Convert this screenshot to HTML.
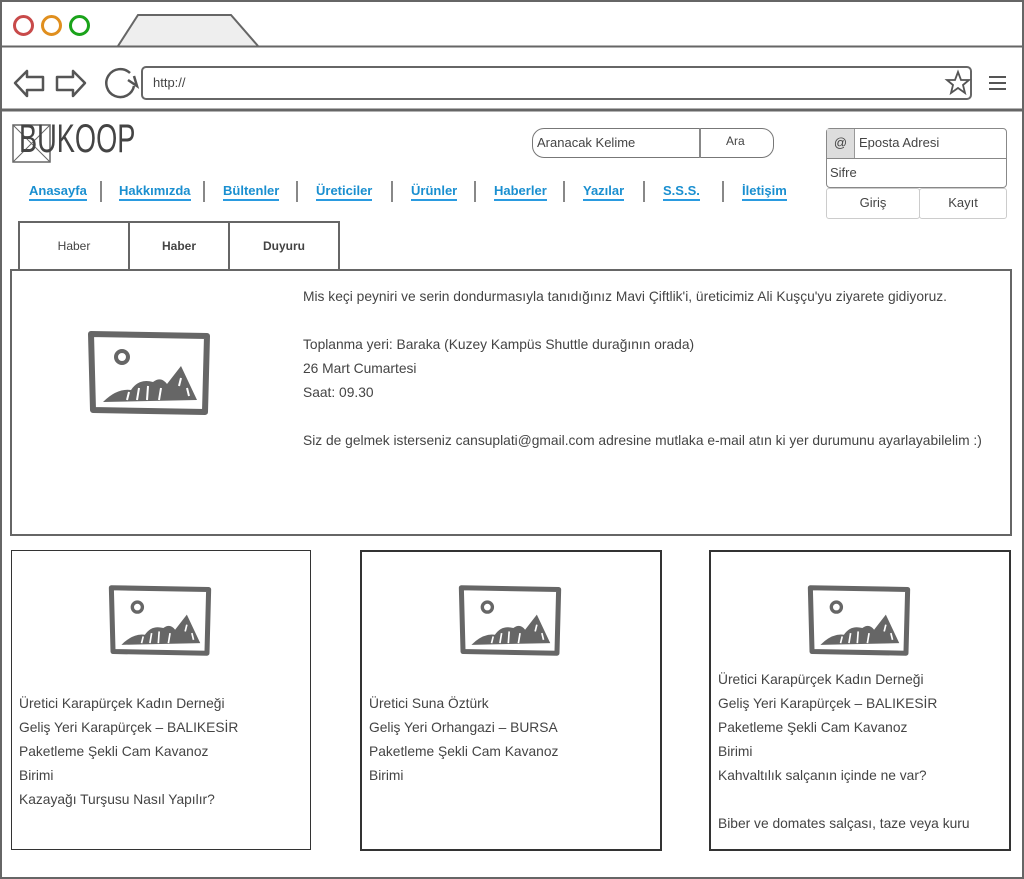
<!DOCTYPE html>
<html><head><meta charset="utf-8"><style>
*{margin:0;padding:0;box-sizing:border-box}
body{width:1024px;height:879px;position:relative;overflow:hidden;background:#fff;font-family:"Liberation Sans",sans-serif;color:#444}
.a{position:absolute}
.t{font-size:13px;white-space:nowrap}
.nav{position:absolute;top:183px;font-size:13px;font-weight:bold;color:#1a8fd0;border-bottom:2px solid #2a9be0;line-height:16px}
.sep{position:absolute;top:181px;width:2px;height:21px;background:#888}
.tab{position:absolute;top:221px;height:50px;border:2px solid #666;font-size:12px;display:flex;align-items:center;justify-content:center}
.card{position:absolute;top:550px;width:300px;height:300px;border:2px solid #333}
.card .lines{position:absolute;left:7px;font-size:13.8px;line-height:24px;white-space:nowrap}
</style></head><body>
<svg width="0" height="0" style="position:absolute"><defs>
<symbol id="img" viewBox="0 0 124 86">
<path d="M4 4 L120 6 L118 82 L6 80 Z" fill="none" stroke="#666" stroke-width="6" stroke-linejoin="round"/>
<circle cx="35" cy="27" r="6" fill="none" stroke="#666" stroke-width="4"/>
<path d="M16 72 Q30 58 44 60 Q52 48 66 52 Q74 46 80 54 L94 36 L110 70 Z" fill="#666"/>
<path d="M40 70 L42 62 M50 70 L52 58 M60 70 L61 56 M72 70 L74 58 M94 48 L92 56 M100 58 L102 66" stroke="#fff" stroke-width="2"/>
</symbol></defs></svg>

<div class="a" style="left:0;top:0;width:1024px;height:879px;border:2px solid #666"></div>
<div class="a" style="left:13px;top:15px;width:21px;height:21px;border:3px solid #c84a4a;border-radius:50%"></div>
<div class="a" style="left:41px;top:15px;width:21px;height:21px;border:3px solid #e08f1e;border-radius:50%"></div>
<div class="a" style="left:69px;top:15px;width:21px;height:21px;border:3px solid #1aa31a;border-radius:50%"></div>
<svg class="a" style="left:0;top:0" width="1024" height="112">
<path d="M118 46 L138 15 L231 15 L258 46" fill="#eee" stroke="#666" stroke-width="2"/>
<line x1="0" y1="46.5" x2="1024" y2="46.5" stroke="#666" stroke-width="2"/>
<line x1="0" y1="110" x2="1024" y2="110" stroke="#666" stroke-width="3"/>
<path d="M15 83 L27 71 L27 77 L43 77 L43 90 L27 90 L27 96 Z" fill="none" stroke="#555" stroke-width="2.5" stroke-linejoin="round"/>
<path d="M85 83 L73 71 L73 77 L57 77 L57 90 L73 90 L73 96 Z" fill="none" stroke="#555" stroke-width="2.5" stroke-linejoin="round"/>
<path d="M134 86 A14 14 0 1 1 130 73" fill="none" stroke="#555" stroke-width="2.5"/>
<path d="M128 80 L137 86 L134 76" fill="none" stroke="#555" stroke-width="2.5"/>
<rect x="142" y="67" width="829" height="32" rx="4" fill="none" stroke="#666" stroke-width="2"/>
<path d="M958 72 L961 80 L969 80 L963 85 L965 93 L958 88 L951 93 L953 85 L947 80 L955 80 Z" fill="none" stroke="#555" stroke-width="1.8"/>
<path d="M989 77 H1006 M989 83 H1006 M989 89 H1006" stroke="#555" stroke-width="2"/>
</svg>
<div class="a t" style="left:153px;top:75px;font-size:13px">http://</div>
<svg class="a" style="left:12px;top:124px" width="39" height="39"><rect x="1" y="1" width="37" height="37" fill="none" stroke="#666" stroke-width="1.5"/><path d="M1 1 L38 38 M38 1 L1 38" stroke="#666"/></svg>
<div class="a" style="left:19px;top:117px;font-size:40px;color:#444;transform:scaleX(0.68);transform-origin:0 0;white-space:nowrap">BUKOOP</div>
<div class="a" style="left:532px;top:128px;width:242px;height:30px;border:1.5px solid #777;border-radius:12px"></div>
<div class="a" style="left:699px;top:128px;width:1.5px;height:30px;background:#888"></div>
<div class="a t" style="left:537px;top:135px">Aranacak Kelime</div>
<div class="a t" style="left:726px;top:134px;font-size:12px">Ara</div>
<div class="a" style="left:826px;top:128px;width:181px;height:31px;border:1.5px solid #888;border-radius:4px 4px 0 0"></div>
<div class="a" style="left:827px;top:129px;width:28px;height:29px;background:#ddd;border-right:1.5px solid #999;text-align:center;font-size:13px;line-height:28px">@</div>
<div class="a t" style="left:859px;top:135px">Eposta Adresi</div>
<div class="a" style="left:826px;top:158px;width:181px;height:30px;border:1.5px solid #888;border-radius:0 0 4px 4px"></div>
<div class="a t" style="left:830px;top:165px">Sifre</div>
<div class="a" style="left:826px;top:188px;width:94px;height:31px;border:1px solid #ccc;border-radius:3px;text-align:center;font-size:13px;line-height:28px">Giriş</div>
<div class="a" style="left:919px;top:188px;width:88px;height:31px;border:1px solid #ccc;border-radius:3px;text-align:center;font-size:13px;line-height:28px">Kayıt</div>
<div class="nav" style="left:29px">Anasayfa</div>
<div class="sep" style="left:100px"></div>
<div class="nav" style="left:119px">Hakkımızda</div>
<div class="sep" style="left:203px"></div>
<div class="nav" style="left:223px">Bültenler</div>
<div class="sep" style="left:296px"></div>
<div class="nav" style="left:316px">Üreticiler</div>
<div class="sep" style="left:391px"></div>
<div class="nav" style="left:411px">Ürünler</div>
<div class="sep" style="left:474px"></div>
<div class="nav" style="left:494px">Haberler</div>
<div class="sep" style="left:563px"></div>
<div class="nav" style="left:583px">Yazılar</div>
<div class="sep" style="left:643px"></div>
<div class="nav" style="left:663px">S.S.S.</div>
<div class="sep" style="left:722px"></div>
<div class="nav" style="left:742px">İletişim</div>
<div class="tab" style="left:18px;width:112px">Haber</div>
<div class="tab" style="left:128px;width:102px;font-weight:bold">Haber</div>
<div class="tab" style="left:228px;width:112px;font-weight:bold">Duyuru</div>
<div class="a" style="left:10px;top:269px;width:1002px;height:267px;border:2px solid #666;background:#fff"></div>
<svg class="a" style="left:87px;top:330px" width="124" height="86"><use href="#img"/></svg>
<div class="a t" style="left:303px;top:285px;line-height:24px;font-size:13.8px">Mis keçi peyniri ve serin dondurmasıyla tanıdığınız Mavi Çiftlik'i, üreticimiz Ali Kuşçu'yu ziyarete gidiyoruz.<br><br>Toplanma yeri: Baraka (Kuzey Kampüs Shuttle durağının orada)<br>26 Mart Cumartesi<br>Saat: 09.30<br><br>Siz de gelmek isterseniz cansuplati@gmail.com adresine mutlaka e-mail atın ki yer durumunu ayarlayabilelim :)</div>
<div class="card" style="left:11px;border-width:1px">
<svg class="a" style="left:96px;top:32px" width="104" height="75"><use href="#img"/></svg>
<div class="lines" style="top:141px">Üretici Karapürçek Kadın Derneği<br>Geliş Yeri Karapürçek – BALIKESİR<br>Paketleme Şekli Cam Kavanoz<br>Birimi<br>Kazayağı Turşusu Nasıl Yapılır?</div>
</div>
<div class="card" style="left:360px;width:302px;height:301px">
<svg class="a" style="left:96px;top:31px" width="104" height="75"><use href="#img"/></svg>
<div class="lines" style="top:140px">Üretici Suna Öztürk<br>Geliş Yeri Orhangazi – BURSA<br>Paketleme Şekli Cam Kavanoz<br>Birimi</div>
</div>
<div class="card" style="left:709px;width:302px;height:301px">
<svg class="a" style="left:96px;top:31px" width="104" height="75"><use href="#img"/></svg>
<div class="lines" style="top:116px">Üretici Karapürçek Kadın Derneği<br>Geliş Yeri Karapürçek – BALIKESİR<br>Paketleme Şekli Cam Kavanoz<br>Birimi<br>Kahvaltılık salçanın içinde ne var?<br><br>Biber ve domates salçası, taze veya kuru</div>
</div>
</body></html>
